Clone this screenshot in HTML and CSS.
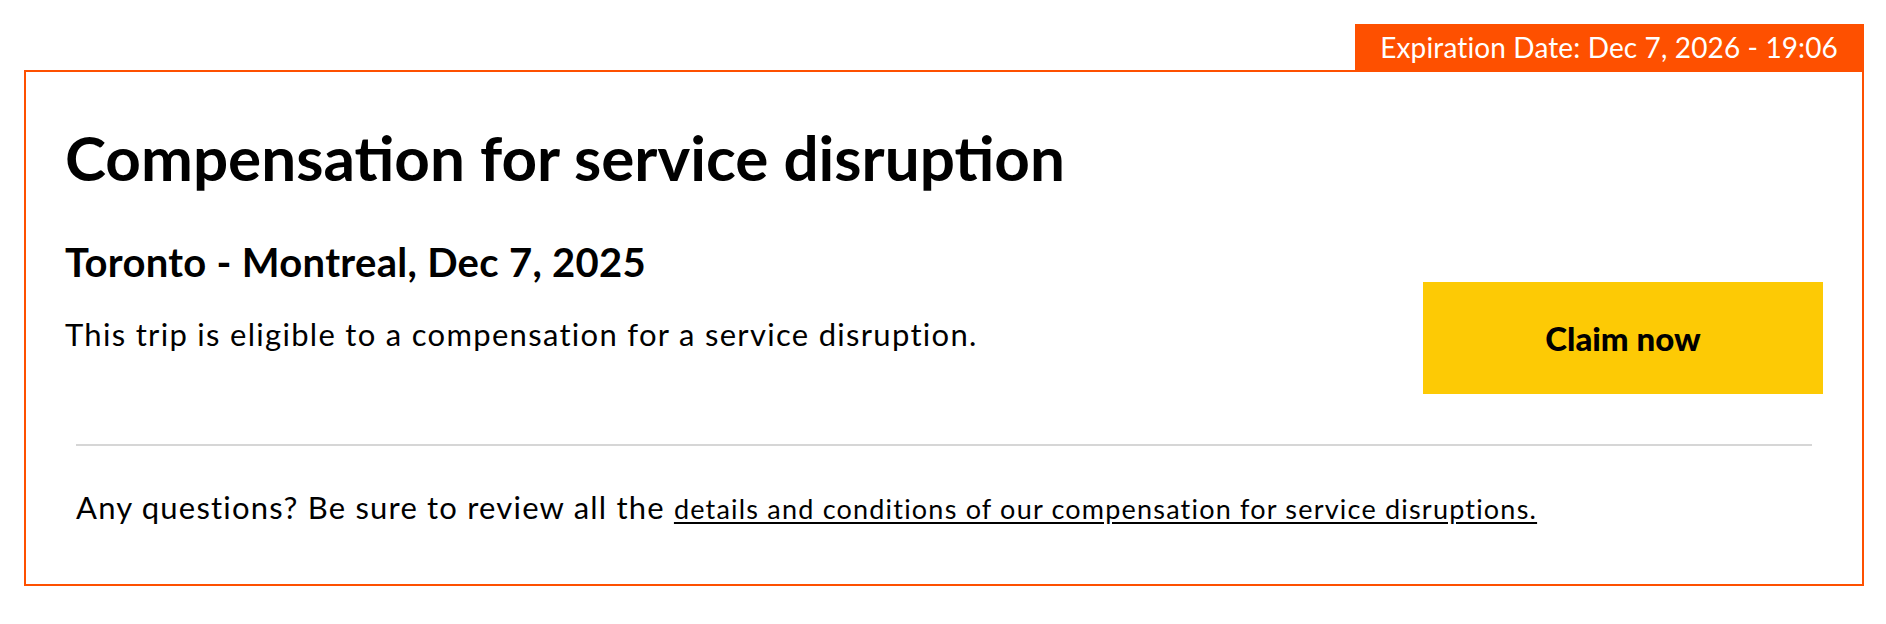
FILE: index.html
```html
<!DOCTYPE html>
<html lang="en">
<head>
<meta charset="utf-8">
<title>Compensation for service disruption</title>
<link rel="stylesheet" href="styles.css">
</head>
<body>
<div class="wrap">
  <div class="badge">Expiration Date: Dec 7, 2026 - 19:06</div>
  <section class="card">
    <h1 class="title">Compensation for service disruption</h1>
    <div class="row">
      <div class="info">
        <h2 class="trip">Toronto - Montreal, Dec 7, 2025</h2>
        <p class="desc">This trip is eligible to a compensation for a service disruption.</p>
      </div>
      <a class="claim" href="#">Claim now</a>
    </div>
    <div class="foot">
      <hr class="divider">
      <p class="note">Any questions? Be sure to review all the <a class="link" href="#">details and conditions of our compensation for service disruptions.</a></p>
    </div>
  </section>
</div>
</body>
</html>
```
FILE: styles.css
```css
html, body {
  margin: 0;
  padding: 0;
  background: #ffffff;
}
body {
  font-family: "Lato", "Liberation Sans", sans-serif;
  color: #000000;
}
.wrap {
  display: flex;
  flex-direction: column;
  margin: 24px 22px 0 24px;
}
.badge {
  align-self: flex-end;
  height: 46px;
  box-sizing: border-box;
  padding: 0 26px 0 25px;
  background: #fe5000;
  color: #ffffff;
  font-size: 28px;
  line-height: 46px;
  letter-spacing: 0.13px;
  white-space: nowrap;
}
.card {
  border: 2px solid #fe5000;
  padding: 48px 39px 56px 39px;
}
.title {
  margin: 0;
  font-size: 62px;
  line-height: 74px;
  font-weight: 700;
}
.row {
  display: flex;
  justify-content: space-between;
  align-items: flex-start;
  margin-top: 44px;
}
.trip {
  margin: 0;
  font-size: 40px;
  line-height: 48px;
  font-weight: 700;
  letter-spacing: 0.3px;
}
.desc {
  margin: 29px 0 0 0;
  font-size: 31px;
  line-height: 38px;
  letter-spacing: 1.3px;
}
.claim {
  margin-top: 44px;
  width: 400px;
  height: 112px;
  display: flex;
  align-items: center;
  justify-content: center;
  background: #fdca05;
  color: #000000;
  text-decoration: none;
  font-size: 33px;
  font-weight: 900;
}
.foot {
  margin: 50px 11px 0 11px;
}
.divider {
  margin: 0;
  border: 0;
  height: 2px;
  background: #d6d6d6;
}
.note {
  margin: 42px 0 0 0;
  font-size: 31px;
  line-height: 38px;
  letter-spacing: 1.2px;
}
.link {
  color: #000000;
  font-size: 27px;
  letter-spacing: 1.2px;
  text-decoration: underline;
  text-underline-offset: 3px;
}
```
